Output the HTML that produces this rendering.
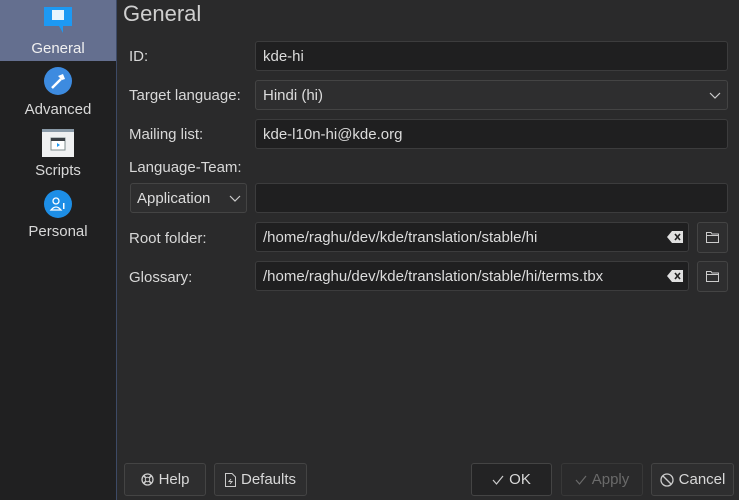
<!DOCTYPE html><html><head><style>
body{margin:0;width:739px;height:500px;background:#2a2a2b;font-family:"Liberation Sans",sans-serif;color:#d8d8d8;overflow:hidden;position:relative;font-size:15px}
.side{position:absolute;left:0;top:0;width:116px;height:500px;background:#202021;border-right:1px solid #3d4a66}
.it{position:absolute;left:0;width:116px;text-align:center;font-size:15px}
.sel{background:#646f8f;color:#f0f0f0}
.a{position:absolute}
.lab{position:absolute;left:129px;font-size:15px}
.inp{position:absolute;left:255px;height:30px;background:#1f1f20;border:1px solid #3c3c3d;border-radius:3px;box-sizing:border-box;padding:0 7px;display:flex;align-items:center;font-size:15px;color:#dcdcdc}
.btn{position:absolute;top:463px;height:33px;background:#2e2e2f;border:1px solid #444;border-radius:3px;box-sizing:border-box;display:flex;align-items:center;justify-content:center;gap:5px;font-size:15px}
.fb{position:absolute;left:697px;width:31px;height:31px;border:1px solid #444;border-radius:3px;box-sizing:border-box;background:#2e2e2f}
</style></head><body>
<div class="side">
<div class="it sel" style="top:0;height:61px"><svg class="a" style="left:43px;top:6px" width="30" height="28"><rect x="1" y="1" width="28" height="19" fill="#1d99f3"/><rect x="9" y="4" width="12" height="10" fill="#e8f4fd"/><polygon points="16,20 20,20 20,27" fill="#1d99f3"/></svg><div style="position:absolute;top:40px;width:116px">General</div></div>
<div class="it" style="top:61px;height:61px"><svg class="a" style="left:44px;top:6px" width="28" height="28"><circle cx="14" cy="14" r="14" fill="#3d8be0"/><path d="M8 21 L17 12" stroke="#fff" stroke-width="2.5"/><path d="M14 9 L19 7 L21 12 L18 13 Z" fill="#fff"/></svg><div style="position:absolute;top:40px;width:116px">Advanced</div></div>
<div class="it" style="top:122px;height:61px"><svg class="a" style="left:42px;top:7px" width="32" height="28"><rect width="32" height="28" fill="#eff0f1"/><rect width="32" height="3" fill="#8a9aa8"/><rect x="9" y="9" width="14" height="12" fill="#fff" stroke="#7f8c8d"/><rect x="9" y="9" width="14" height="3" fill="#3a3f44"/><polygon points="15,14 18,16 15,18" fill="#1d99f3"/></svg><div style="position:absolute;top:40px;width:116px">Scripts</div></div>
<div class="it" style="top:183px;height:61px"><svg class="a" style="left:44px;top:7px" width="28" height="28"><circle cx="14" cy="14" r="14" fill="#1d8ee6"/><circle cx="12" cy="11" r="3" fill="none" stroke="#fff" stroke-width="1.3"/><path d="M7 20 Q12 14 17 20 Z" fill="none" stroke="#fff" stroke-width="1.3"/><rect x="19" y="13" width="1.5" height="6" fill="#fff"/></svg><div style="position:absolute;top:40px;width:116px">Personal</div></div>
</div>
<div class="a" style="left:123px;top:1px;font-size:22px;color:#cfcfcf">General</div>
<div class="lab" style="top:48px">ID:</div>
<div class="inp" style="top:41px;width:473px">kde-hi</div>
<div class="lab" style="top:87px">Target language:</div>
<div class="inp" style="top:80px;width:473px;background:#2e2e2f;border-color:#444">Hindi (hi)<svg class="a" style="right:6px;top:11px" width="12" height="8"><path d="M1 1 L6 6 L11 1" stroke="#ccc" fill="none" stroke-width="1.2"/></svg></div>
<div class="lab" style="top:126px">Mailing list:</div>
<div class="inp" style="top:119px;width:473px">kde-l10n-hi@kde.org</div>
<div class="lab" style="top:159px">Language-Team:</div>
<div class="inp" style="left:130px;top:183px;width:117px;background:#2e2e2f;border-color:#444;padding-left:6px">Application<svg class="a" style="right:5px;top:11px" width="12" height="8"><path d="M1 1 L6 6 L11 1" stroke="#ccc" fill="none" stroke-width="1.2"/></svg></div>
<div class="inp" style="top:183px;width:473px"></div>
<div class="lab" style="top:230px">Root folder:</div>
<div class="inp" style="top:222px;width:434px">/home/raghu/dev/kde/translation/stable/hi<svg class="a" style="right:5px;top:8px" width="16" height="12"><path d="M5 0 H16 V12 H5 L0 6 Z" fill="#e0e0e0"/><path d="M8 3 L13 9 M13 3 L8 9" stroke="#222" stroke-width="1.6"/></svg></div>
<div class="fb" style="top:222px"><svg class="a" style="left:8px;top:8px" width="13" height="12"><path d="M0.5 1.5 H5 L6 3 H12.5 V11.5 H0.5 Z M0.5 4.5 H12.5" stroke="#ccc" fill="none"/></svg></div>
<div class="lab" style="top:269px">Glossary:</div>
<div class="inp" style="top:261px;width:434px">/home/raghu/dev/kde/translation/stable/hi/terms.tbx<svg class="a" style="right:5px;top:8px" width="16" height="12"><path d="M5 0 H16 V12 H5 L0 6 Z" fill="#e0e0e0"/><path d="M8 3 L13 9 M13 3 L8 9" stroke="#222" stroke-width="1.6"/></svg></div>
<div class="fb" style="top:261px"><svg class="a" style="left:8px;top:8px" width="13" height="12"><path d="M0.5 1.5 H5 L6 3 H12.5 V11.5 H0.5 Z M0.5 4.5 H12.5" stroke="#ccc" fill="none"/></svg></div>
<div class="btn" style="left:124px;width:82px"><svg width="13" height="13"><circle cx="6.5" cy="6.5" r="5.5" fill="none" stroke="#ccc" stroke-width="1.3"/><circle cx="6.5" cy="6.5" r="2.2" fill="none" stroke="#ccc"/><path d="M2.5 2.5 L4.8 4.8 M10.5 2.5 L8.2 4.8 M2.5 10.5 L4.8 8.2 M10.5 10.5 L8.2 8.2" stroke="#ccc" stroke-width="1.6"/></svg>Help</div>
<div class="btn" style="left:214px;width:93px"><svg width="11" height="14"><path d="M0.5 0.5 H7 L10.5 4 V13.5 H0.5 Z" fill="none" stroke="#ccc"/><path d="M6 6 L4 8.5 H7 L5 11" stroke="#ccc" fill="none"/></svg>Defaults</div>
<div class="btn" style="left:471px;width:81px;background:#232324"><svg width="12" height="10"><path d="M1 5 L4.5 9 L11 1" stroke="#ccc" fill="none" stroke-width="1.2"/></svg>OK</div>
<div class="btn" style="left:561px;width:82px;color:#6a6a6a;border-color:#383838;background:#2a2a2b"><svg width="12" height="10"><path d="M1 5 L4.5 9 L11 1" stroke="#6a6a6a" fill="none" stroke-width="1.2"/></svg>Apply</div>
<div class="btn" style="left:651px;width:83px"><svg width="14" height="14"><circle cx="7" cy="7" r="6" fill="none" stroke="#ccc" stroke-width="1.3"/><path d="M3 3 L11 11" stroke="#ccc" stroke-width="1.3"/></svg>Cancel</div>
</body></html>
